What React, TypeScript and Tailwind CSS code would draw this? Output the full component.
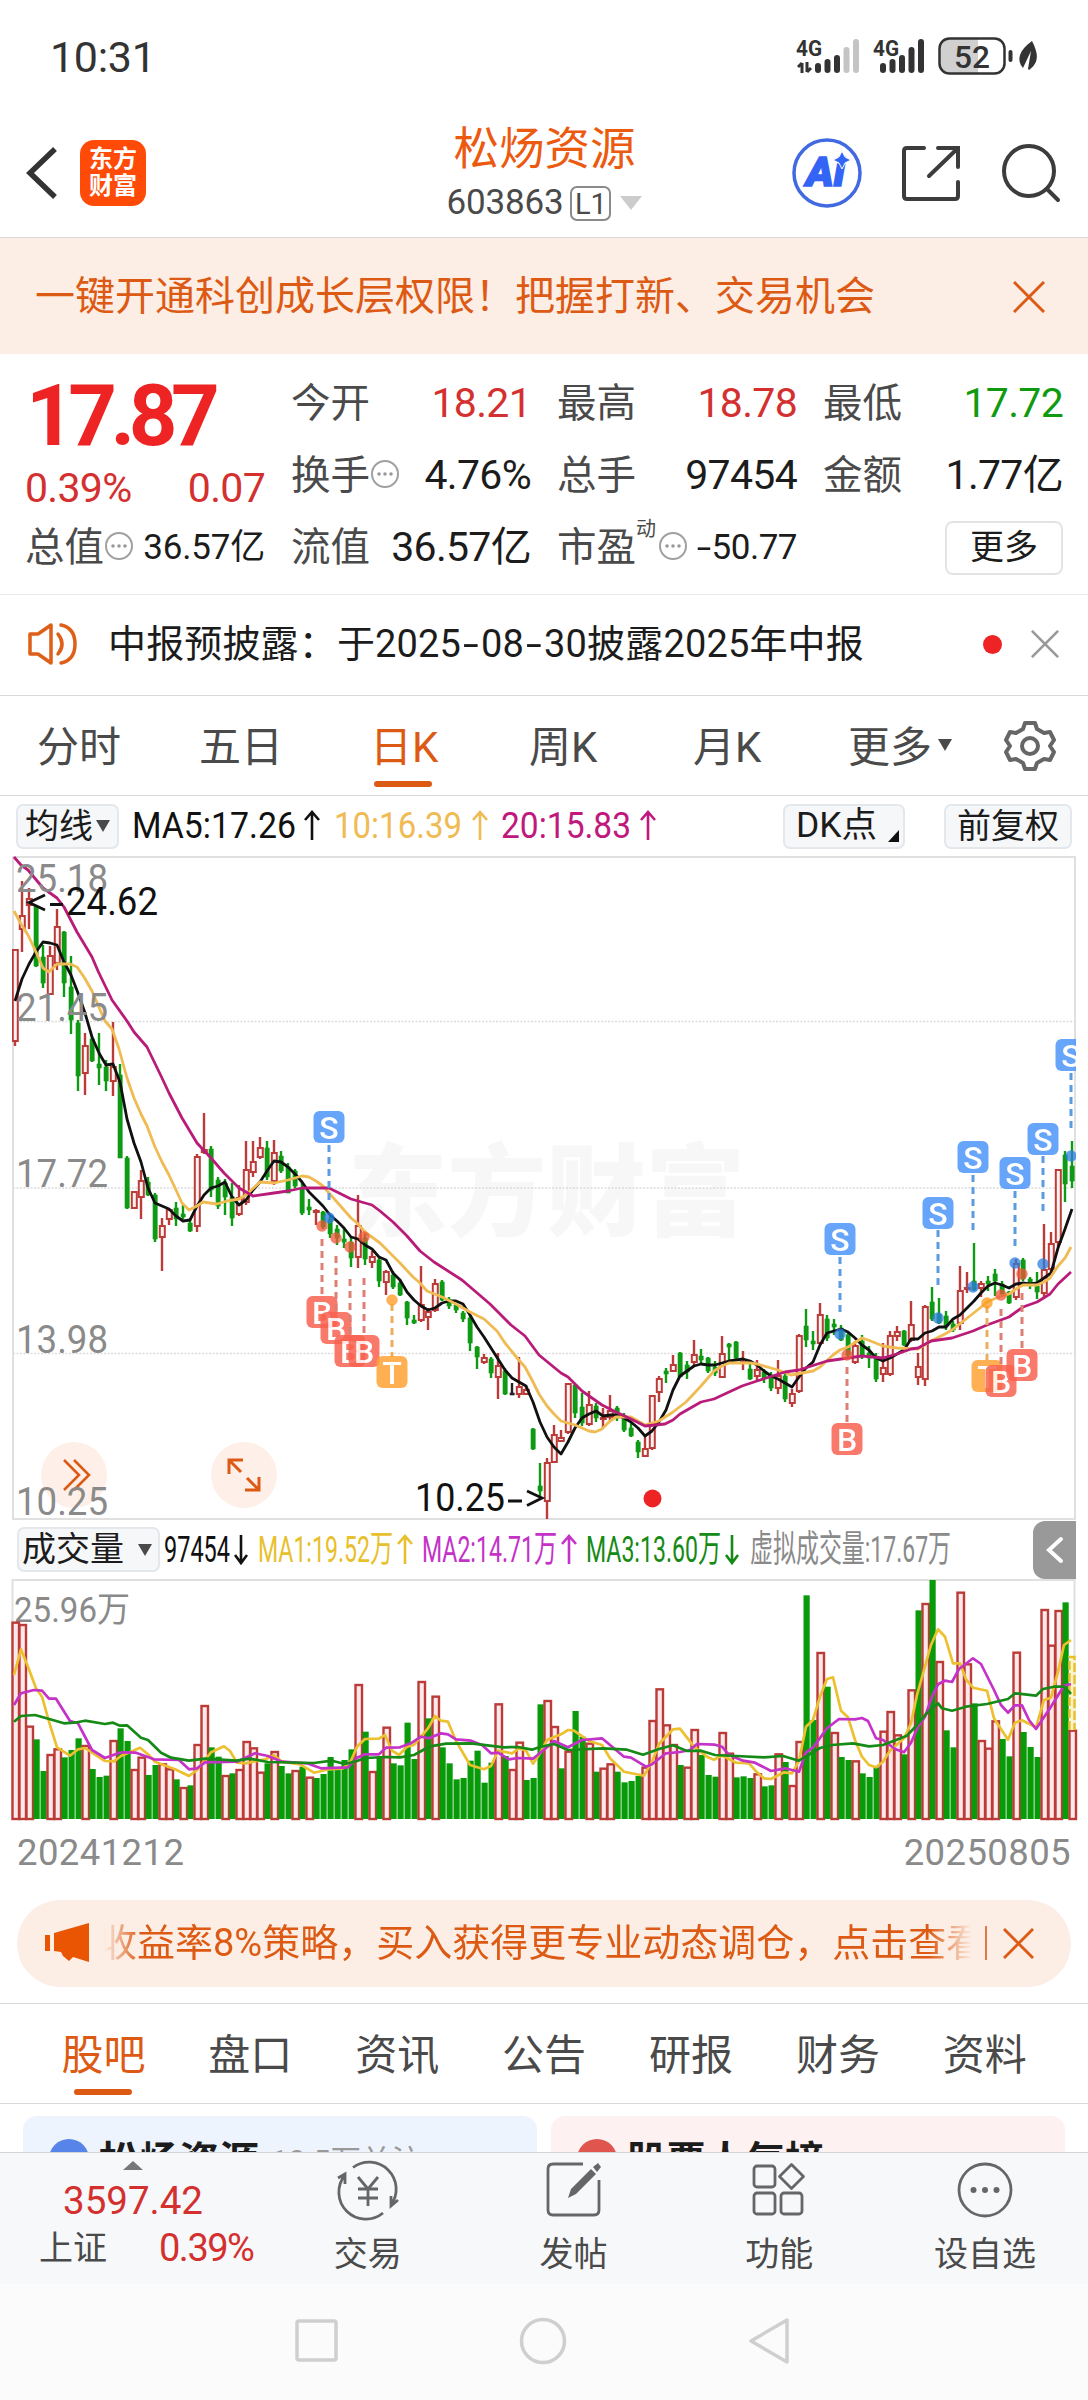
import type { ReactNode } from "react";

const STEP = 7;
const X0 = 15;

type Candle = [string, number, number, number, number];

// color, high, body top, body bottom, low
const candles: Candle[] = [
  ["r", 949, 949, 1042, 1046], ["r", 881, 915, 930, 952], ["r", 888, 898, 906, 929], ["g", 906, 906, 966, 967],
  ["g", 945, 957, 983, 988], ["r", 946, 955, 995, 995], ["r", 909, 926, 964, 970], ["g", 931, 932, 983, 997],
  ["g", 956, 987, 1020, 1034], ["g", 1020, 1023, 1076, 1091], ["r", 1033, 1045, 1074, 1095], ["g", 1036, 1039, 1061, 1062],
  ["g", 1033, 1064, 1068, 1085], ["g", 1060, 1067, 1081, 1091], ["r", 1022, 1066, 1082, 1096], ["g", 1064, 1075, 1158, 1158],
  ["g", 1156, 1158, 1208, 1209], ["r", 1191, 1191, 1209, 1209], ["r", 1170, 1180, 1198, 1219], ["g", 1177, 1182, 1195, 1196],
  ["g", 1193, 1195, 1239, 1242], ["r", 1218, 1225, 1238, 1271], ["r", 1208, 1209, 1220, 1225], ["g", 1202, 1208, 1219, 1226],
  ["g", 1205, 1214, 1217, 1219], ["g", 1218, 1223, 1231, 1232], ["r", 1154, 1156, 1227, 1232], ["r", 1113, 1149, 1153, 1154],
  ["g", 1146, 1149, 1190, 1197], ["g", 1177, 1180, 1206, 1209], ["g", 1179, 1183, 1197, 1215], ["g", 1183, 1197, 1218, 1226],
  ["r", 1185, 1197, 1215, 1216], ["r", 1141, 1169, 1203, 1205], ["r", 1141, 1161, 1173, 1177], ["r", 1137, 1147, 1158, 1159],
  ["g", 1141, 1148, 1177, 1180], ["r", 1140, 1152, 1182, 1185], ["g", 1151, 1156, 1171, 1173], ["g", 1163, 1167, 1193, 1193],
  ["g", 1169, 1171, 1186, 1188], ["g", 1182, 1188, 1213, 1215], ["g", 1199, 1207, 1210, 1215], ["r", 1209, 1210, 1213, 1225],
  ["g", 1211, 1212, 1227, 1229], ["g", 1216, 1219, 1234, 1238], ["g", 1225, 1229, 1238, 1245], ["g", 1227, 1239, 1242, 1248],
  ["g", 1236, 1242, 1258, 1267], ["r", 1195, 1225, 1258, 1268], ["g", 1232, 1238, 1259, 1265], ["r", 1251, 1256, 1263, 1268],
  ["g", 1258, 1260, 1281, 1287], ["r", 1270, 1271, 1283, 1295], ["g", 1271, 1275, 1287, 1289], ["g", 1279, 1283, 1295, 1296],
  ["g", 1301, 1302, 1318, 1325], ["g", 1315, 1320, 1323, 1324], ["r", 1266, 1304, 1321, 1322], ["r", 1308, 1311, 1318, 1330],
  ["r", 1279, 1283, 1311, 1312], ["g", 1280, 1282, 1300, 1301], ["g", 1297, 1300, 1306, 1309], ["g", 1303, 1305, 1310, 1313],
  ["g", 1311, 1313, 1319, 1322], ["g", 1315, 1318, 1343, 1351], ["g", 1346, 1347, 1357, 1369], ["r", 1354, 1357, 1363, 1364],
  ["g", 1357, 1359, 1373, 1378], ["r", 1353, 1365, 1378, 1399], ["g", 1368, 1371, 1394, 1395], ["k", 1383, 1393, 1395, 1395],
  ["r", 1357, 1386, 1395, 1398], ["r", 1385, 1389, 1395, 1395], ["g", 1428, 1429, 1449, 1450], ["g", 1463, 1486, 1491, 1497],
  ["r", 1458, 1462, 1502, 1519], ["r", 1425, 1434, 1463, 1463], ["r", 1430, 1437, 1442, 1442], ["r", 1383, 1383, 1433, 1434],
  ["g", 1384, 1385, 1413, 1418], ["g", 1393, 1407, 1423, 1426], ["r", 1391, 1404, 1425, 1426], ["g", 1403, 1406, 1418, 1422],
  ["r", 1408, 1417, 1420, 1428], ["r", 1395, 1410, 1418, 1420], ["g", 1406, 1408, 1418, 1421], ["g", 1413, 1418, 1430, 1432],
  ["g", 1423, 1428, 1436, 1437], ["g", 1440, 1442, 1452, 1458], ["r", 1436, 1448, 1457, 1457], ["r", 1395, 1395, 1449, 1450],
  ["r", 1376, 1378, 1393, 1402], ["g", 1368, 1371, 1374, 1383], ["r", 1355, 1364, 1372, 1372], ["g", 1352, 1353, 1377, 1377],
  ["g", 1361, 1365, 1372, 1379], ["r", 1340, 1354, 1363, 1366], ["g", 1349, 1356, 1360, 1363], ["g", 1357, 1358, 1371, 1373],
  ["g", 1361, 1367, 1373, 1376], ["r", 1336, 1353, 1378, 1378], ["g", 1343, 1344, 1347, 1360], ["g", 1341, 1342, 1358, 1361],
  ["r", 1351, 1361, 1364, 1370], ["g", 1362, 1369, 1379, 1380], ["r", 1360, 1369, 1377, 1382], ["g", 1369, 1372, 1378, 1383],
  ["g", 1372, 1375, 1388, 1391], ["r", 1360, 1375, 1389, 1394], ["g", 1374, 1376, 1399, 1402], ["r", 1389, 1393, 1404, 1407],
  ["r", 1334, 1335, 1392, 1393], ["g", 1309, 1326, 1340, 1347], ["g", 1331, 1341, 1344, 1350], ["r", 1303, 1314, 1344, 1344],
  ["g", 1315, 1319, 1338, 1341], ["g", 1319, 1324, 1327, 1335], ["g", 1325, 1328, 1340, 1341], ["g", 1333, 1335, 1355, 1357],
  ["r", 1341, 1345, 1363, 1364], ["g", 1335, 1341, 1355, 1359], ["g", 1346, 1353, 1358, 1368], ["g", 1353, 1358, 1379, 1382],
  ["r", 1343, 1367, 1375, 1382], ["r", 1331, 1335, 1375, 1376], ["r", 1326, 1331, 1337, 1341], ["g", 1330, 1331, 1345, 1346],
  ["r", 1301, 1324, 1341, 1342], ["r", 1353, 1366, 1378, 1385], ["r", 1305, 1306, 1380, 1386], ["g", 1287, 1302, 1319, 1321],
  ["g", 1298, 1314, 1323, 1324], ["g", 1311, 1316, 1326, 1330], ["g", 1321, 1324, 1330, 1332], ["r", 1266, 1290, 1324, 1330],
  ["r", 1272, 1287, 1289, 1293], ["g", 1243, 1281, 1290, 1291], ["r", 1281, 1283, 1289, 1297], ["g", 1276, 1281, 1284, 1291],
  ["g", 1269, 1274, 1281, 1296], ["g", 1281, 1284, 1294, 1297], ["g", 1291, 1292, 1303, 1304], ["r", 1259, 1263, 1298, 1300],
  ["g", 1258, 1260, 1279, 1281], ["g", 1277, 1279, 1283, 1289], ["g", 1272, 1286, 1292, 1299], ["r", 1224, 1269, 1294, 1297],
  ["r", 1232, 1243, 1270, 1274], ["r", 1169, 1169, 1243, 1247], ["g", 1151, 1155, 1184, 1202], ["g", 1141, 1166, 1181, 1188],
];

const ma5 = [
  1001, 979, 964, 952, 942, 943, 945, 962, 975, 993, 1013, 1037, 1053, 1065, 1064, 1082, 1119, 1143, 1162, 1188, 1203, 1206,
  1209, 1216, 1221, 1220, 1206, 1195, 1188, 1186, 1182, 1197, 1205, 1200, 1190, 1182, 1171, 1161, 1162, 1167, 1174, 1182, 1192,
  1199, 1206, 1215, 1221, 1228, 1237, 1239, 1245, 1249, 1257, 1260, 1273, 1280, 1292, 1300, 1306, 1310, 1308, 1303, 1301, 1301,
  1304, 1315, 1327, 1337, 1348, 1359, 1370, 1378, 1382, 1386, 1402, 1422, 1437, 1447, 1454, 1442, 1428, 1418, 1414, 1411, 1416,
  1415, 1415, 1418, 1422, 1428, 1436, 1431, 1422, 1410, 1390, 1376, 1371, 1366, 1364, 1365, 1365, 1363, 1361, 1360, 1359, 1361,
  1365, 1371, 1376, 1379, 1383, 1387, 1377, 1368, 1362, 1345, 1333, 1331, 1329, 1332, 1338, 1345, 1350, 1358, 1361, 1358, 1354,
  1350, 1339, 1339, 1333, 1331, 1327, 1327, 1319, 1315, 1308, 1301, 1293, 1286, 1283, 1285, 1288, 1284, 1283, 1284, 1283, 1278,
  1273, 1248, 1229, 1209,
];

const ma10 =
  "14,911 21,924 28,935 36,952 43,968 49,972 57,964 70,964 77,967 84,977 92,991 98,1005 105,1021 112,1029 119,1049 127,1078 134,1098 141,1114 147,1126 155,1147 162,1162 169,1175 176,1190 182,1203 189,1210 197,1206 203,1202 217,1204 227,1201 239,1199 246,1195 260,1182 274,1183 288,1180 302,1176 309,1177 316,1181 323,1186 329,1193 337,1202 351,1218 357,1223 365,1232 380,1243 387,1250 400,1263 413,1277 420,1283 427,1291 442,1297 456,1304 470,1312 484,1319 497,1331 505,1343 518,1359 525,1367 532,1380 539,1394 547,1406 554,1414 561,1421 575,1425 589,1431 595,1432 602,1429 609,1422 616,1417 631,1417 645,1425 652,1423 659,1421 673,1412 686,1402 701,1386 714,1371 722,1366 729,1363 750,1363 757,1364 771,1368 778,1370 791,1375 813,1371 820,1367 833,1355 840,1350 848,1347 862,1338 868,1340 883,1346 897,1348 918,1349 931,1341 945,1334 952,1330 966,1319 980,1308 987,1302 1001,1296 1009,1294 1016,1289 1023,1285 1037,1285 1044,1282 1050,1278 1058,1266 1065,1258 1071,1247";

const ma20 =
  "14,857 21,865 28,870 43,888 57,898 64,907 77,932 92,957 98,971 112,1000 127,1021 134,1032 147,1047 162,1078 169,1093 182,1118 197,1143 211,1158 224,1173 239,1188 253,1196 274,1193 288,1191 302,1188 329,1188 343,1195 351,1199 372,1205 380,1211 393,1222 407,1236 420,1251 434,1262 462,1280 490,1304 511,1325 525,1336 539,1355 561,1373 568,1377 582,1391 602,1405 616,1412 631,1419 645,1426 665,1424 673,1420 680,1414 701,1402 714,1399 742,1386 757,1381 785,1372 799,1370 827,1361 848,1358 862,1356 883,1358 897,1354 911,1349 918,1348 931,1341 952,1338 973,1331 987,1325 1009,1317 1023,1307 1037,1302 1050,1294 1058,1284 1071,1272";

type Marker = { kind: "S" | "B" | "T"; x: number; y: number; from: number; to: number; dot: number };

const markers: Marker[] = [
  { kind: "S", x: 329, y: 1127, from: 1145, to: 1200, dot: 1218 },
  { kind: "B", x: 322, y: 1312, from: 1239, to: 1296, dot: 1226 },
  { kind: "B", x: 336, y: 1328, from: 1256, to: 1312, dot: 1238 },
  { kind: "B", x: 350, y: 1351, from: 1279, to: 1336, dot: 1247 },
  { kind: "B", x: 364, y: 1351, from: 1278, to: 1335, dot: 1237 },
  { kind: "T", x: 392, y: 1372, from: 1304, to: 1357, dot: 1300 },
  { kind: "S", x: 840, y: 1239, from: 1257, to: 1312, dot: 1334 },
  { kind: "S", x: 938, y: 1213, from: 1230, to: 1285, dot: 1318 },
  { kind: "S", x: 973, y: 1157, from: 1175, to: 1230, dot: 1287 },
  { kind: "S", x: 1015, y: 1173, from: 1191, to: 1246, dot: 1263 },
  { kind: "S", x: 1043, y: 1139, from: 1156, to: 1211, dot: 1264 },
  { kind: "S", x: 1071, y: 1055, from: 1073, to: 1128, dot: 1156 },
  { kind: "B", x: 847, y: 1439, from: 1367, to: 1423, dot: 1355 },
  { kind: "T", x: 987, y: 1376, from: 1306, to: 1360, dot: 1303 },
  { kind: "B", x: 1001, y: 1381, from: 1309, to: 1366, dot: 1295 },
  { kind: "B", x: 1022, y: 1365, from: 1293, to: 1349, dot: 1274 },
];

const markerColor = {
  S: { box: "#4a94fa", line: "#5b9be0", dot: "#2a7de0" },
  B: { box: "#f9604f", line: "#dd7f74", dot: "#f2553a" },
  T: { box: "#ffa233", line: "#ebae5f", dot: "#ff9a1e" },
};

// bar tops, three units per pixel
const volumes =
  "r305 r312 r617 g658 g753 r702 r685 g712 g690 g655 r675 g747 g771 g767 r660 g625 g663 r747 r710 g765 g735 r730 r745 g778 r801 g796 r672 r555 g682 g710 r765 g760 r747 r663 r682 r755 g730 r693 g738 g760 r750 g740 r770 g774 g762 g711 g750 g720 g688 r492 g635 r753 g710 r620 g730 g736 g608 g717 r483 g595 r527 g682 g730 g778 g774 g722 g692 g788 g728 r550 g708 r747 r665 g780 g774 g553 r540 r618 g745 r692 g573 g650 r668 g755 r743 r730 g755 g787 g783 g768 r740 r600 r505 r613 r672 g735 r740 r627 g705 g765 g770 r636 r698 g772 g769 g774 r760 g799 g796 r700 g726 r795 r663 g226 g600 r396 g500 r636 g711 g720 r721 g760 g771 g742 r632 r573 r643 g703 r508 g271 r249 g180 r423 g631 g682 r215 r430 g550 r660 r683 r601 g657 g709 r395 g636 g681 g711 r267 r374 r270 g247 r629".split(" ");

const volMa1 =
  "14,465 21,388 28,440 36,505 42,530 50,615 57,682 70,707 78,688 85,684 92,698 105,723 114,724 121,708 140,683 148,703 155,725 175,748 189,768 197,750 211,697 224,679 230,693 237,728 246,730 266,717 274,706 282,725 300,733 314,758 329,748 343,745 351,722 357,680 365,657 379,656 385,645 392,692 399,705 407,680 414,675 428,625 435,588 441,602 448,605 456,663 470,735 484,748 491,738 498,692 512,700 519,685 526,692 533,731 540,700 547,660 561,643 568,630 574,632 589,663 602,675 610,715 624,755 644,767 652,725 659,672 673,628 680,626 694,680 708,712 714,719 722,706 736,728 749,730 757,757 764,775 771,777 784,757 792,760 799,722 806,620 813,600 820,530 827,477 833,472 841,572 848,592 855,660 862,710 869,735 876,742 883,725 890,692 904,655 911,610 917,525 924,450 931,375 938,328 945,350 953,430 960,430 966,478 973,503 987,512 994,595 1008,659 1015,608 1022,601 1036,622 1044,540 1051,533 1058,455 1064,375 1071,360";
const volMa2 =
  "14,555 21,520 34,510 42,512 49,536 56,536 70,603 78,610 92,690 105,714 121,697 136,698 154,718 179,720 189,748 197,745 205,727 237,725 255,700 268,708 282,725 307,730 321,745 348,742 357,713 365,703 379,703 386,683 400,682 412,668 421,650 429,655 441,640 448,643 456,658 471,662 482,675 491,700 498,698 509,718 518,714 533,716 547,682 554,663 568,682 582,660 602,655 624,710 631,713 646,740 652,733 666,700 680,696 690,690 697,672 715,674 722,680 729,705 743,722 755,728 771,753 785,745 799,755 806,697 813,683 827,625 839,597 855,598 862,594 868,603 876,655 883,660 895,687 904,697 911,668 918,620 925,590 932,530 938,493 945,482 952,486 959,447 973,415 981,432 994,510 1001,555 1008,578 1015,556 1022,556 1029,600 1036,627 1050,565 1064,497 1071,492";
const volMa3 =
  "14,605 21,588 35,585 50,598 64,610 77,607 85,602 105,612 113,608 120,617 127,616 141,653 148,660 161,698 171,713 189,722 205,716 236,722 250,716 268,726 314,729 332,722 345,732 357,723 365,714 386,711 400,712 414,705 429,680 446,671 471,670 504,682 518,681 532,689 539,682 554,672 568,690 603,685 627,689 643,704 659,687 673,676 687,693 701,692 715,705 736,708 764,712 783,708 799,722 820,684 832,675 853,670 869,679 883,675 907,647 917,615 926,582 938,550 942,565 952,572 966,560 987,552 1008,537 1015,520 1036,527 1043,507 1054,500 1064,500 1071,522";

const volY = (v: number) => v / 3 - 60;

function scaleLine(points: string) {
  return points
    .split(" ")
    .map((p) => {
      const [x, y] = p.split(",").map(Number);
      return `${x},${volY(y).toFixed(1)}`;
    })
    .join(" ");
}

function StatusBar() {
  const bars = [63, 59, 55, 47, 39];
  return (
    <div className="h-[112px] flex items-start justify-between pl-[50px] pr-[48px]">
      <span className="text-[43px] leading-[50px] mt-[32px] tracking-[-0.3px] text-[#333]">10:31</span>
      <svg width="246" height="112" viewBox="794 0 246 112" className="font-bold">
        <text x="796" y="55.500" fontSize="22" fill="#333" textLength="26" lengthAdjust="spacingAndGlyphs">4G</text>
        <text x="873" y="55.500" fontSize="22" fill="#333" textLength="26" lengthAdjust="spacingAndGlyphs">4G</text>
        <path d="M802 73v-10M798 67l4-4M807 62v10M811 68l-4 4" stroke="#333" strokeWidth="3" fill="none" />
        {bars.map((top, i) => (
          <g key={top}>
            <rect x={815 + i * 9.5} y={top} width="6" height={73 - top} rx="3" fill={i < 3 ? "#333" : "#c4c4c4"} />
            <rect x={880 + i * 9.5} y={top} width="6" height={73 - top} rx="3" fill="#333" />
          </g>
        ))}
        <path d="M950 39h28v34h-28a10 10 0 0 1-10-10v-14a10 10 0 0 1 10-10z" fill="#d0d0d0" />
        <rect x="939.500" y="38.500" width="65" height="35" rx="10" fill="none" stroke="#333" strokeWidth="2.500" />
        <text x="954" y="67.500" fontSize="32" fill="#333" textLength="36" lengthAdjust="spacingAndGlyphs" fontWeight="500">52</text>
        <rect x="1008.500" y="50" width="4" height="12" rx="2" fill="#333" />
        <path d="M1032 41c6 12 8 21-3 29l-1-1 3-18-8 17c-7-8-4-18 9-27z" fill="#333" />
      </svg>
    </div>
  );
}

function Header() {
  return (
    <header className="h-[126px] flex items-center border-b border-[#d9d9d9] pl-[26px] pr-[26px] pb-[3px]">
      <svg width="32" height="56" viewBox="0 0 32 56" fill="none" stroke="#333" strokeWidth="5.500">
        <path d="M29 4L4 28l25 24" />
      </svg>
      <div className="w-[66px] h-[66px] ml-[22px] rounded-[14px] bg-[#ff4a08] text-white font-bold text-[24px] leading-[27px] flex flex-col items-center justify-center">
        <span>东方</span>
        <span>财富</span>
      </div>
      <div className="flex-1 flex flex-col items-center pl-[152px]">
        <div className="text-[45.5px] leading-[58px] text-[#ec5a10]">松炀资源</div>
        <div className="flex items-center text-[#4a4a4a] mt-[2px]">
          <span className="text-[35px] leading-[44px] tracking-[-0.2px]">603863</span>
          <span className="ml-[7px] w-[41px] h-[35px] border-2 border-[#8a8a8a] rounded-[7px] text-[29px] leading-[32px] text-center">L1</span>
          <svg width="22" height="16" viewBox="0 0 22 16" className="ml-[9px]">
            <path d="M0 1h22L11 15z" fill="#ccc" />
          </svg>
        </div>
      </div>
      <div className="flex items-center">
        <svg width="72" height="72" viewBox="0 0 72 72" fill="none">
          <circle cx="36" cy="36" r="33" stroke="#4169e1" strokeWidth="3.500" />
          <text x="15" y="49" fontSize="41" fontWeight="900" fontStyle="italic" fill="#3464f5" stroke="#3464f5" strokeWidth="1.500" textLength="39" lengthAdjust="spacingAndGlyphs">Ai</text>
          <path d="M51 14l3 6 6 3-6 3-3 6-3-6-6-3 6-3z" fill="#3464f5" stroke="#fff" strokeWidth="1" />
        </svg>
        <svg width="60" height="60" viewBox="0 0 60 60" fill="none" stroke="#3c3c3c" strokeWidth="4" strokeLinecap="round" className="ml-[38px]">
          <path d="M23 5H6q-3 0-3 3v45q0 3 3 3h48q3 0 3-3V39M37 5h20v19M56 6L28 33" />
        </svg>
        <svg width="62" height="62" viewBox="0 0 62 62" fill="none" stroke="#3c3c3c" strokeWidth="4" strokeLinecap="round" className="ml-[39px]">
          <circle cx="29" cy="29" r="25" />
          <path d="M47 47l11 11" />
        </svg>
      </div>
    </header>
  );
}

function Cross({ size, color, width = 3 }: { size: number; color: string; width?: number }) {
  return (
    <svg width={size} height={size} viewBox="0 0 32 32" fill="none" stroke={color} strokeWidth={width}>
      <path d="M1 1l30 30M31 1L1 31" />
    </svg>
  );
}

function Info() {
  return (
    <svg width="30" height="30" viewBox="0 0 30 30" className="shrink-0 mb-[4px]">
      <circle cx="15" cy="15" r="13" fill="none" stroke="#a0a0a0" strokeWidth="2" />
      <circle cx="9" cy="15" r="1.800" fill="#999" />
      <circle cx="15" cy="15" r="1.800" fill="#999" />
      <circle cx="21" cy="15" r="1.800" fill="#999" />
    </svg>
  );
}

function Cell({ label, info, children }: { label: string; info?: boolean; children: ReactNode }) {
  return (
    <div className="h-[72px] flex items-center justify-between whitespace-nowrap">
      <span className="flex items-center text-[39.5px] tracking-normal text-[#4a4a4a]">
        {label}
        {info && <Info />}
      </span>
      {children}
    </div>
  );
}

function Quote() {
  return (
    <section className="h-[241px] pt-[14px] px-[25px] border-b border-[#e8e8e8] grid grid-cols-4 gap-x-[26px] grid-rows-[72px_72px_72px] text-[41px] tracking-[-0.7px] text-[#1c1c1c]">
      <div className="row-span-2">
        <div className="h-[96px] leading-[96px] pl-[1px] text-[85px] font-bold tracking-[-6.5px] text-[#ee2424]">17.87</div>
        <div className="h-[48px] leading-[48px] flex justify-between text-[#d3302f]">
          <span>0.39%</span>
          <span>0.07</span>
        </div>
      </div>
      <Cell label="今开"><span className="text-[#d3302f]">18.21</span></Cell>
      <Cell label="最高"><span className="text-[#d3302f]">18.78</span></Cell>
      <Cell label="最低"><span className="text-[#0f9a0f]">17.72</span></Cell>
      <Cell label="换手" info><span>4.76%</span></Cell>
      <Cell label="总手"><span>97454</span></Cell>
      <Cell label="金额"><span>1.77亿</span></Cell>
      <Cell label="总值" info><span className="text-[35px] tracking-[-0.2px]">36.57亿</span></Cell>
      <Cell label="流值"><span>36.57亿</span></Cell>
      <div className="h-[72px] flex items-center whitespace-nowrap">
        <span className="text-[39.5px] tracking-normal text-[#4a4a4a]">市盈</span>
        <span className="text-[20px] text-[#4a4a4a] self-start mt-[2px]">动</span>
        <span className="ml-[3px]"><Info /></span>
        <span className="flex-1 flex justify-end text-[35px] tracking-[-0.5px]">
          <span className="mr-[3px] scale-x-150">-</span>50.77
        </span>
      </div>
      <div className="flex items-center justify-end">
        <div className="w-[118px] h-[54px] border-2 border-[#e4e4e4] rounded-[8px] text-center text-[34px] leading-[49px] tracking-normal">更多</div>
      </div>
    </section>
  );
}

function Notice() {
  return (
    <section className="h-[101px] flex items-center border-b border-[#d9d9d9] pl-[27px] pr-[29px] pb-[2px]">
      <svg width="52" height="44" viewBox="0 0 52 44" fill="none" stroke="#dd5f18" strokeWidth="3.500" strokeLinejoin="round">
        <path d="M3 12h8L24 3v38L11 32H3z" />
        <path d="M31 12q8 10 0 20M34 3q14 3 14 19T34 41" strokeLinecap="round" />
      </svg>
      <span className="ml-[29px] text-[38px] text-[#1c1c1c] whitespace-nowrap tracking-[0.15px]">
        中报预披露：于2025<span className="inline-block w-[20px] text-center scale-x-150">-</span>08<span className="inline-block w-[20px] text-center scale-x-150">-</span>30披露2025年中报
      </span>
      <span className="ml-auto mr-[29px] w-[19px] h-[19px] rounded-full bg-[#ee2424]" />
      <Cross size={28} color="#999" />
    </section>
  );
}

function Tri({ className = "" }: { className?: string }) {
  return (
    <svg width="14" height="12" viewBox="0 0 14 12" className={className}>
      <path d="M0 0h14L7 12z" fill="#4a4a4a" />
    </svg>
  );
}

function PeriodTabs() {
  return (
    <nav className="h-[100px] border-b border-[#d9d9d9] flex items-center text-[42px] text-[#4a4a4a] pl-[37px] pr-[32px] pt-[3px] whitespace-nowrap">
      <span className="w-[162px]">分时</span>
      <span className="w-[171px]">五日</span>
      <span className="w-[159px] relative text-[#dd5a14]">
        日K
        <span className="absolute left-[4px] top-[65px] w-[58px] h-[6px] rounded-full bg-[#dd5a14]" />
      </span>
      <span className="w-[164px]">周K</span>
      <span className="w-[155px]">月K</span>
      <span>更多</span>
      <Tri className="ml-[6px] mb-[4px]" />
      <svg width="52" height="52" viewBox="0 0 52 52" fill="none" stroke="#666" strokeWidth="4" strokeLinejoin="round" className="ml-auto mb-[3px]">
        <path d="M21 3h10l2 6 7 4 6-1 4 8-4 6 4 6-4 8-6-1-7 4-2 6H21l-2-6-7-4-6 1-4-8 4-6-4-6 4-8 6 1 7-4z" />
        <circle cx="26" cy="26" r="8" />
      </svg>
    </nav>
  );
}

const chip = "h-[45px] border-2 border-[#e4e7eb] bg-[#f6f7f9] rounded-[7px] flex items-center text-[34px] text-[#1c1c1c] whitespace-nowrap";

// value followed by its thin direction arrow
function Trend({ x, w, text, color, up, arrow }: { x: number; w: number; text: string; color: string; up: boolean; arrow: number }) {
  return (
    <g fill={color} stroke="none">
      <text x={x} y="34" fontSize="37" textLength={w} lengthAdjust="spacingAndGlyphs">{text}</text>
      <path
        d={up ? `M${arrow - 7} 16l7-8 7 8M${arrow} 9v27` : `M${arrow - 6} 27l6 8 6-8M${arrow} 34V7`}
        fill="none"
        stroke={color}
        strokeWidth="2.600"
      />
    </g>
  );
}

function MaRow() {
  return (
    <div className="h-[60px] flex items-center pl-[16px] pr-[16px]">
      <div className={`${chip} w-[103px] pl-[7px]`}>
        均线
        <Tri className="ml-[3px]" />
      </div>
      <svg width="650" height="44" viewBox="119 0 650 44">
        <Trend x={132} w={164} text="MA5:17.26" color="#111" up arrow={312} />
        <Trend x={334} w={128} text="10:16.39" color="#efbb52" up arrow={480} />
        <Trend x={501} w={130} text="20:15.83" color="#c0187c" up arrow={648} />
      </svg>
      <div className={`${chip} w-[122px] ml-auto mr-[39px] pl-[11px] justify-between pr-[4px]`}>
        <span className="text-[35.500px]">DK点</span>
        <svg width="11" height="12" viewBox="0 0 11 12" className="mt-[20px]">
          <path d="M11 0v12H0z" fill="#111" />
        </svg>
      </div>
      <div className={`${chip} w-[128px] justify-center`}>前复权</div>
    </div>
  );
}

function PriceChart() {
  const line = ma5.map((y, i) => `${X0 + i * STEP},${y}`).join(" ");
  return (
    <svg width="1088" height="664" viewBox="0 856 1088 664" className="block">
      <defs>
        <clipPath id="plot">
          <rect x="12" y="855" width="1064" height="665" />
        </clipPath>
      </defs>
      <text x="348" y="1228" fontSize="100" fontWeight="900" fill="#f7f7f7" textLength="397" lengthAdjust="spacingAndGlyphs">东方财富</text>
      {[1021.5, 1188, 1353.5].map((y) => (
        <line key={y} x1="13" x2="1075" y1={y} y2={y} stroke="#dcdcdc" strokeWidth="1.500" strokeDasharray="2 1.500" />
      ))}
      <rect x="13" y="857" width="1062" height="662" fill="none" stroke="#e0e0e0" strokeWidth="2" />
      <circle cx="74" cy="1475" r="33" fill="#fef0e8" />
      <circle cx="244" cy="1475" r="33" fill="#fef0e8" />
      <path d="M64 1460l15 15-15 15M74 1460l15 15-15 15" fill="none" stroke="#dd5a14" strokeWidth="2.600" />
      <path d="M229 1474v-14h14M230 1461l11 11M247 1478l12 12M259 1477v13h-14" fill="none" stroke="#dd5a14" strokeWidth="3" />

      <g clipPath="url(#plot)">
        {candles.map(([c, high, top, bottom, low], i) => {
          const x = X0 + i * STEP;
          const color = c === "r" ? "#bb3b39" : c === "g" ? "#0f9a14" : "#222";
          return (
            <g key={i} stroke={color} strokeWidth="2.400">
              <line x1={x} x2={x} y1={high} y2={top} />
              <line x1={x} x2={x} y1={bottom} y2={low} />
              {c === "r" ? (
                <rect x={x - 2.2} y={top + 1} width="5" height={Math.max(bottom - top - 2, 1)} fill="#fff2f2" strokeWidth="2" />
              ) : (
                <rect x={x - 2} y={top} width="4.200" height={bottom - top} fill={color} strokeWidth="0.600" />
              )}
            </g>
          );
        })}
        <g fill="none" strokeWidth="2.800" strokeLinejoin="round">
          <polyline points={line} stroke="#111" />
          <polyline points={ma10} stroke="#efbb52" />
          <polyline points={ma20} stroke="#b91c78" />
        </g>
      </g>

      <g fill="#8a8a8a" fontSize="38">
        {([["25.18", 892], ["21.45", 1021], ["17.72", 1187], ["13.98", 1353], ["10.25", 1515]] as [string, number][]).map(([t, y]) => (
          <text key={t} x="16" y={y} textLength="92" lengthAdjust="spacingAndGlyphs">{t}</text>
        ))}
      </g>
      <g fill="#111" fontSize="38">
        <text x="66" y="915" textLength="92" lengthAdjust="spacingAndGlyphs">24.62</text>
        <text x="415" y="1511" textLength="90" lengthAdjust="spacingAndGlyphs">10.25</text>
        <path d="M45 895l-16 7.500 16 7.500M50 904.500h13M527 1491l15 7-15 7.500M508 1501h14" fill="none" stroke="#111" strokeWidth="2.800" />
      </g>
      <circle cx="652.500" cy="1498.500" r="9" fill="#ee2424" />

      <g clipPath="url(#plot)">
        {markers.map((m) => {
          const c = markerColor[m.kind];
          return (
            <g key={`${m.kind}${m.x}`}>
              <line x1={m.x} x2={m.x} y1={m.from} y2={m.to} stroke={c.line} strokeWidth="3" strokeDasharray="7 5" />
              <circle cx={m.x} cy={m.dot} r="5.700" fill={c.dot} opacity="0.75" />
              <g opacity="0.84">
                <rect x={m.x - 15.5} y={m.y - 16} width="31" height="32" rx="6" fill={c.box} />
                <text x={m.x} y={m.y + 11.5} fontSize="32" fontWeight="500" fill="#fff" textAnchor="middle">{m.kind}</text>
              </g>
            </g>
          );
        })}
      </g>
    </svg>
  );
}

function VolumeHeader() {
  return (
    <div className="h-[59px] flex items-center pl-[17px] pr-[12px]">
      <div className={`${chip} w-[143px] pl-[3px] text-[33.5px]`}>
        成交量
        <Tri className="ml-[14px]" />
      </div>
      <svg width="800" height="44" viewBox="160 0 800 44">
        <Trend x={164} w={66} text="97454" color="#111" up={false} arrow={241} />
        <Trend x={258} w={135} text="MA1:19.52万" color="#e8bf2c" up arrow={405} />
        <Trend x={422} w={135} text="MA2:14.71万" color="#c432c8" up arrow={569} />
        <Trend x={586} w={135} text="MA3:13.60万" color="#168a16" up={false} arrow={732} />
        <text x="750" y="34" fontSize="37" fill="#8a8a8a" textLength="201" lengthAdjust="spacingAndGlyphs">虚拟成交量:17.67万</text>
      </svg>
      <div className="ml-auto w-[43px] h-[58px] rounded-l-[12px] bg-[#999] flex items-center justify-center">
        <svg width="18" height="28" viewBox="0 0 18 28" fill="none" stroke="#fff" strokeWidth="4" strokeLinecap="round">
          <path d="M15 3L3 14l12 11" />
        </svg>
      </div>
    </div>
  );
}

function VolumeChart() {
  return (
    <svg width="1088" height="242" viewBox="0 -1 1088 242" className="block">
      <path d="M12.500 240V0H1074.500V240" fill="none" stroke="#e0e0e0" strokeWidth="2" />
      <text x="14" y="42" fontSize="35" fill="#8a8a8a" textLength="116" lengthAdjust="spacingAndGlyphs">25.96万</text>
      {volumes.map((v, i) => {
        const x = X0 + i * STEP;
        const y = volY(Number(v.slice(1)));
        return v[0] === "r" ? (
          <rect key={i} x={x - 2.5} y={y + 1} width="6.500" height={238 - y} fill="#fde9e9" stroke="#bb3b39" strokeWidth="2.400" />
        ) : (
          <rect key={i} x={x - 2.5} y={y} width="6.200" height={239 - y} fill="#089a08" />
        );
      })}
      {/* projected volume of the running session */}
      <path d="M1069.500 150V77h5v73" fill="#fdf3c8" stroke="#e8bf2c" strokeWidth="2.400" strokeDasharray="9 3" />
      <g fill="none" strokeWidth="2.700" strokeLinejoin="round">
        <polyline points={scaleLine(volMa1)} stroke="#ecc02e" />
        <polyline points={scaleLine(volMa2)} stroke="#c432c8" />
        <polyline points={scaleLine(volMa3)} stroke="#168a16" />
      </g>
    </svg>
  );
}

function Promo() {
  return (
    <div className="mx-[17px] h-[87px] rounded-full bg-[#fceee5] flex items-center pl-[28px] pr-[37px] pb-[1px] text-[#dd5a14]">
      <svg width="44" height="40" viewBox="0 0 44 40" fill="#ea5504">
        <path d="M0 12h5v16H0zM9 10L44 0v39l-16-5-4 4-6-5-2-4-7-1z" />
      </svg>
      <div className="ml-[15px] w-[868px] overflow-hidden whitespace-nowrap text-[38px] leading-[50px] [mask-image:linear-gradient(to_right,transparent,black_36px,black_825px,transparent)]">
        <span className="inline-block ml-[-5px]">收益率8%策略，买入获得更专业动态调仓，点击查看</span>
      </div>
      <span className="ml-auto mr-[16px] w-[2px] h-[34px] bg-[#dd7a44]" />
      <Cross size={31} color="#dd5a14" />
    </div>
  );
}

const sections = ["股吧", "盘口", "资讯", "公告", "研报", "财务", "资料"];

function SectionTabs() {
  return (
    <nav className="h-[101px] border-y border-[#d9d9d9] flex pl-[30px] text-[42px] text-[#4a4a4a]">
      {sections.map((s, i) => (
        <div key={s} className={`w-[146.9px] flex flex-col items-center pt-[20px] ${i === 0 ? "text-[#dd5a14]" : ""}`}>
          <span className="leading-[64px]">{s}</span>
          {i === 0 && <span className="w-[58px] h-[6px] rounded-full bg-[#dd5a14] mt-[1px]" />}
        </div>
      ))}
    </nav>
  );
}

function Cards() {
  return (
    <div className="h-[48px] overflow-hidden flex gap-[14px] px-[23px] pt-[12px] whitespace-nowrap">
      <div className="flex-1 h-[120px] rounded-[14px] bg-[#edf4fd] flex pl-[26px]">
        <span className="mt-[23px] w-[40px] h-[40px] rounded-full bg-[#5684e8]" />
        <span className="ml-[10px] mt-[18px] text-[40px] leading-[56px] font-bold text-[#1c1c1c]">松炀资源</span>
        <span className="ml-[12px] mt-[22px] text-[30.500px] leading-[48px] text-[#999]">10.5万关注 ›</span>
      </div>
      <div className="flex-1 h-[120px] rounded-[14px] bg-[#fdf2f1] flex pl-[26px]">
        <span className="mt-[23px] w-[40px] h-[40px] rounded-full bg-[#e0564f]" />
        <span className="ml-[10px] mt-[18px] text-[39.500px] leading-[56px] font-bold text-[#1c1c1c]">股票人气榜</span>
        <span className="ml-[18px] mt-[22px] text-[29px] leading-[48px] text-[#999]">›</span>
      </div>
    </div>
  );
}

function Action({ label, children }: { label: string; children: ReactNode }) {
  return (
    <div className="w-[206px] flex flex-col items-center pt-[5px]">
      <svg width="64" height="64" viewBox="0 0 64 64" fill="none" stroke="#666" strokeWidth="2.800">
        {children}
      </svg>
      <span className="text-[34px] leading-[48px] mt-[8px] text-[#4a4a4a]">{label}</span>
    </div>
  );
}

function BottomBar() {
  return (
    <div className="h-[132px] border-t border-[#d5d5d5] bg-[#f7f8fa] flex">
      <div className="w-[265px] pl-[39px] pr-[9px] text-[#d3302f]">
        <svg width="20" height="9" viewBox="0 0 20 9" className="ml-[84px] mt-[8px]">
          <path d="M0 9h20L10 0z" fill="#777" />
        </svg>
        <div className="pl-[24px] text-[38.5px] leading-[61px]">3597.42</div>
        <div className="flex text-[38px] leading-[34px] items-center">
          <span className="text-[34px] text-[#4a4a4a]">上证</span>
          <span className="ml-[52px] tracking-[-1.5px]">0.39%</span>
        </div>
      </div>
      <Action label="交易">
        <path d="M17 9.500A27 27 0 0 1 55 47M47 55A27 27 0 0 1 9 17M2 20l7-4v10M62 42l-7 6V38" />
        <path d="M22 19l10 12 10-12M32 31v17M22 31h20M22 40h20" />
      </Action>
      <Action label="发帖">
        <path d="M42 6H12q-5 0-5 5v41q0 5 5 5h41q5 0 5-5V22" />
        <path d="M27 40l3-9 20-20 5 5-20 20z" fill="#666" stroke="none" />
        <path d="M52 9l5-4 3 4-4 5z" fill="#666" stroke="none" />
      </Action>
      <Action label="功能">
        <rect x="7" y="8" width="21" height="21" rx="3" />
        <rect x="7" y="35" width="21" height="21" rx="3" />
        <rect x="34" y="35" width="21" height="21" rx="3" />
        <path d="M44.500 6.500L56.500 18.500 44.500 30.500 32.500 18.500z" strokeLinejoin="round" />
      </Action>
      <Action label="设自选">
        <circle cx="32" cy="32" r="26" />
        <g fill="#666" stroke="none">
          <circle cx="20.500" cy="32" r="3" />
          <circle cx="32" cy="32" r="3" />
          <circle cx="43.500" cy="32" r="3" />
        </g>
      </Action>
    </div>
  );
}

function SystemNav() {
  return (
    <div className="h-[116px] bg-[#fbfbfb] flex justify-center gap-[178px] pt-[33px] pr-[2px]">
      <svg width="48" height="48" viewBox="0 0 48 48" fill="none" stroke="#cfcfcf" strokeWidth="3.500">
        <rect x="4" y="4" width="39" height="39" rx="2" />
      </svg>
      <svg width="48" height="48" viewBox="0 0 48 48" fill="none" stroke="#cfcfcf" strokeWidth="3.500">
        <circle cx="24" cy="24" r="21.500" />
      </svg>
      <svg width="48" height="48" viewBox="0 0 48 48" fill="none" stroke="#cfcfcf" strokeWidth="3.500" strokeLinejoin="round">
        <path d="M42 3v42L6 24z" />
      </svg>
    </div>
  );
}

export default function App() {
  return (
    <div className="w-[1088px] h-[2400px] overflow-hidden bg-white font-[Roboto,'Noto_Sans_CJK_SC',sans-serif]">
      <StatusBar />
      <Header />
      <div className="h-[116px] bg-[#fceee5] flex items-center justify-between pl-[35px] pr-[43px] pt-[2px] text-[40px] text-[#dd5a14]">
        <span>一键开通科创成长层权限！把握打新、交易机会</span>
        <Cross size={32} color="#dd5a14" />
      </div>
      <Quote />
      <Notice />
      <PeriodTabs />
      <MaRow />
      <PriceChart />
      <VolumeHeader />
      <VolumeChart />
      <div className="h-[79px] pl-[17px] pr-[17px] flex justify-between text-[36.500px] leading-[63px] tracking-[0.4px] text-[#8a8a8a]">
        <span>20241212</span>
        <span>20250805</span>
      </div>
      <Promo />
      <div className="h-[16px]" />
      <SectionTabs />
      <Cards />
      <BottomBar />
      <SystemNav />
    </div>
  );
}
